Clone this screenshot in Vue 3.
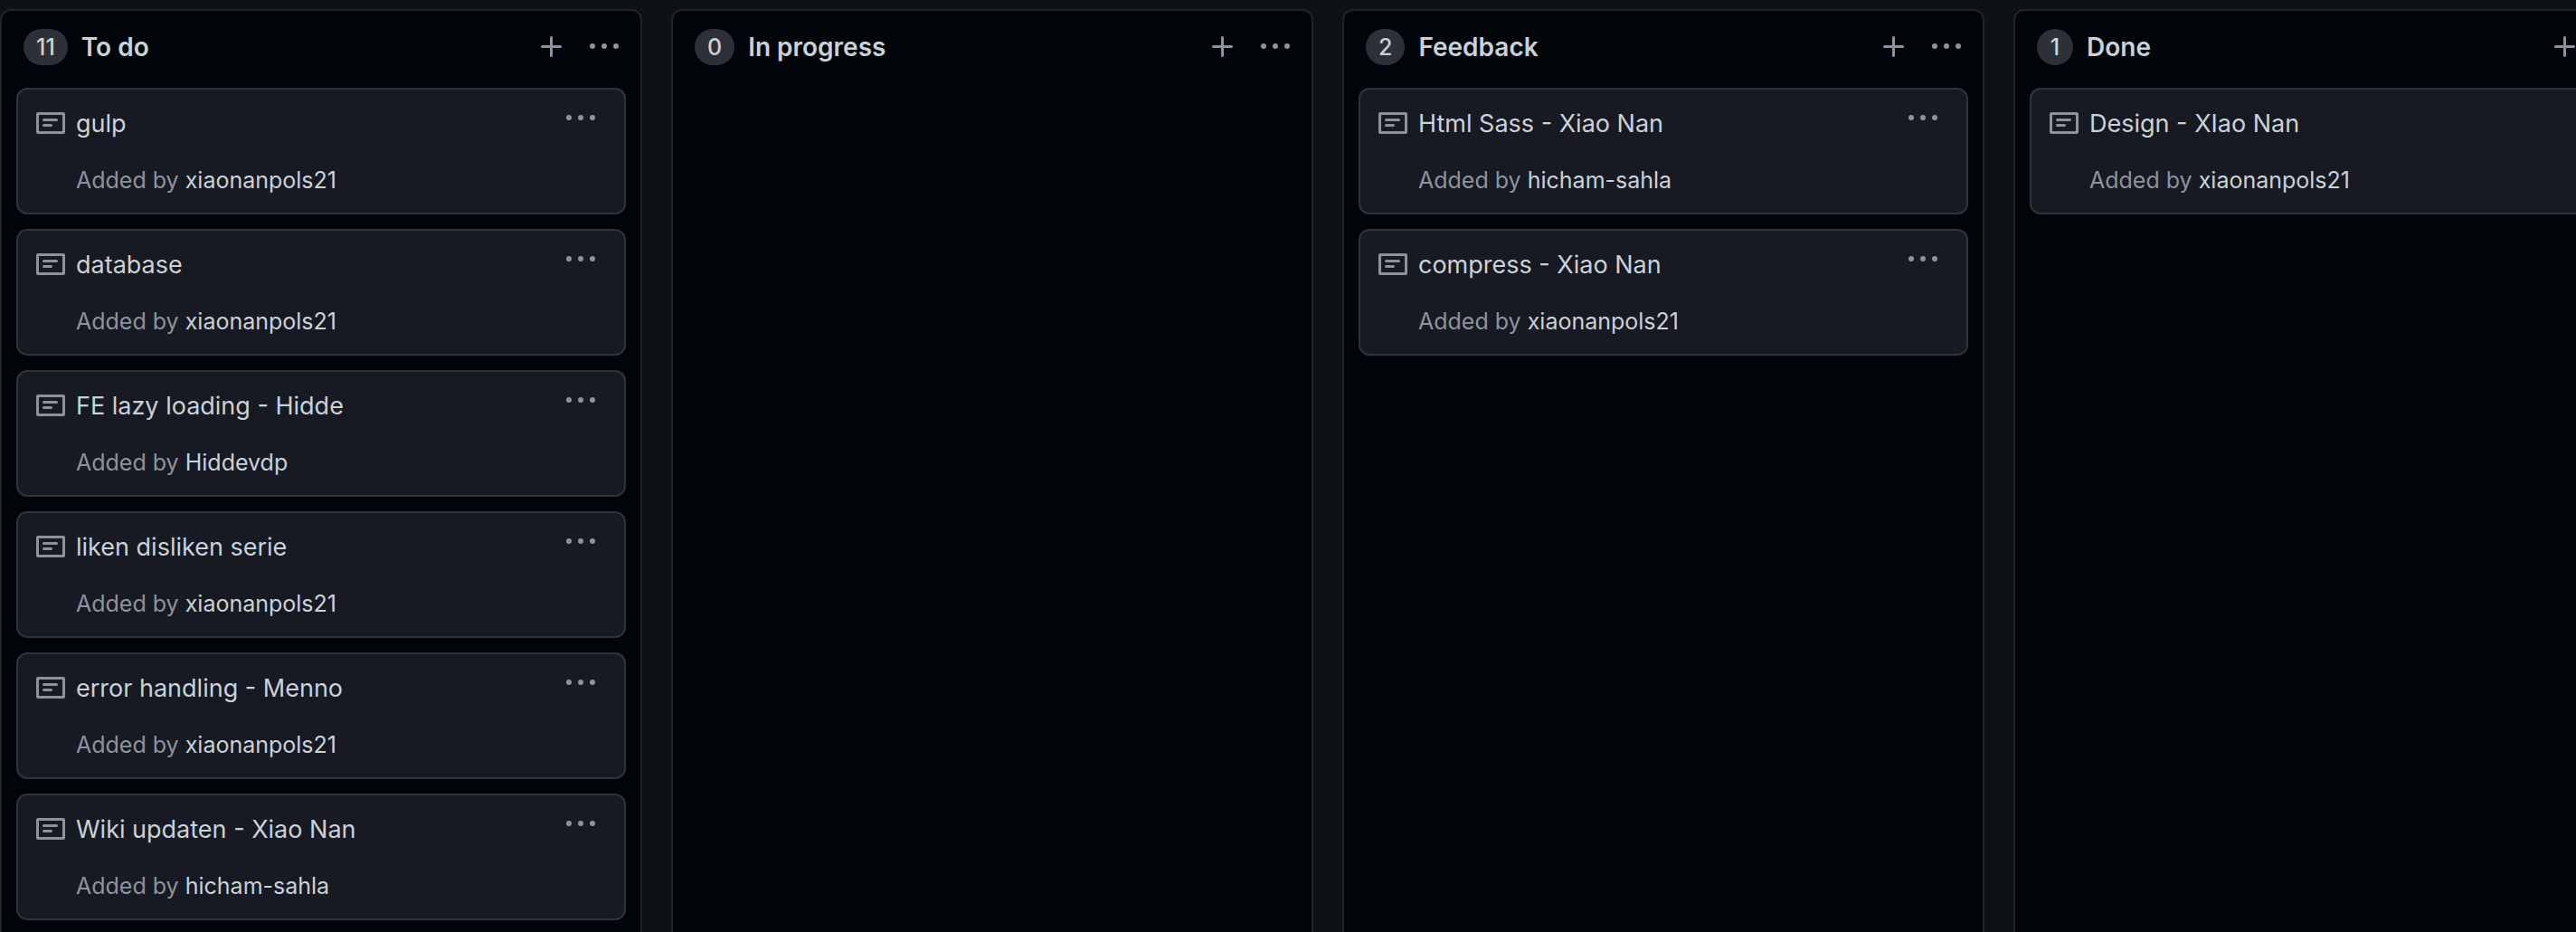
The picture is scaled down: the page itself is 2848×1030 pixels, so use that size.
<script setup>
const columns = [
  {
    name: 'To do',
    count: 11,
    cards: [
      { title: 'gulp', author: 'xiaonanpols21' },
      { title: 'database', author: 'xiaonanpols21' },
      { title: 'FE lazy loading - Hidde', author: 'Hiddevdp' },
      { title: 'liken disliken serie', author: 'xiaonanpols21' },
      { title: 'error handling - Menno', author: 'xiaonanpols21' },
      { title: 'Wiki updaten - Xiao Nan', author: 'hicham-sahla' },
    ],
  },
  { name: 'In progress', count: 0, cards: [] },
  {
    name: 'Feedback',
    count: 2,
    cards: [
      { title: 'Html Sass - Xiao Nan', author: 'hicham-sahla' },
      { title: 'compress - Xiao Nan', author: 'xiaonanpols21' },
    ],
  },
  {
    name: 'Done',
    count: 1,
    cards: [{ title: 'Design - XIao Nan', author: 'xiaonanpols21' }],
  },
]
</script>

<template>
  <main class="board">
    <section v-for="column in columns" :key="column.name" class="column">
      <header class="column-header">
        <span class="counter">{{ column.count }}</span>
        <h3 class="column-name">{{ column.name }}</h3>
        <div class="actions">
          <button type="button" class="icon-button">
            <svg class="icon" viewBox="0 0 16 16" aria-hidden="true">
              <path d="M7.75 2a.75.75 0 01.75.75V7h4.25a.75.75 0 110 1.5H8.5v4.25a.75.75 0 11-1.5 0V8.5H2.75a.75.75 0 010-1.5H7V2.75A.75.75 0 017.75 2z" />
            </svg>
          </button>
          <button type="button" class="icon-button">
            <svg class="icon" viewBox="0 0 16 16" aria-hidden="true">
              <path d="M8 9a1.5 1.5 0 100-3 1.5 1.5 0 000 3zM1.5 9a1.5 1.5 0 100-3 1.5 1.5 0 000 3zm13 0a1.5 1.5 0 100-3 1.5 1.5 0 000 3z" />
            </svg>
          </button>
        </div>
      </header>
      <div class="cards">
        <article v-for="card in column.cards" :key="card.title" class="card">
          <svg class="icon note" viewBox="0 0 16 16" aria-hidden="true">
            <path fill-rule="evenodd" d="M0 3c0-.55.45-1 1-1h14c.55 0 1 .45 1 1v10c0 .55-.45 1-1 1H1c-.55 0-1-.45-1-1V3zm1.5.5v9h13v-9h-13zM3.5 6.25a.75.75 0 01.75-.75h7a.75.75 0 010 1.5h-7a.75.75 0 01-.75-.75zm.75 2.25a.75.75 0 000 1.5h4a.75.75 0 000-1.5h-4z" />
          </svg>
          <div class="card-body">
            <p class="card-title">{{ card.title }}</p>
            <p class="card-meta">Added by <a class="author" href="#">{{ card.author }}</a></p>
          </div>
          <button type="button" class="icon-button">
            <svg class="icon" viewBox="0 0 16 16" aria-hidden="true">
              <path d="M8 9a1.5 1.5 0 100-3 1.5 1.5 0 000 3zM1.5 9a1.5 1.5 0 100-3 1.5 1.5 0 000 3zm13 0a1.5 1.5 0 100-3 1.5 1.5 0 000 3z" />
            </svg>
          </button>
        </article>
      </div>
    </section>
  </main>
</template>

<style>
body {
  margin: 0;
  background: #0e1217;
}
</style>

<style scoped>
.board {
  box-sizing: border-box;
  display: flex;
  gap: 32px;
  height: 100vh;
  padding-top: 10px;
  overflow: hidden;
  color: #c9d1d9;
  font-family: Inter, "Liberation Sans", sans-serif;
}

.column {
  box-sizing: border-box;
  flex: 0 0 710px;
  border: 2px solid #21252a;
  border-bottom: 0;
  border-radius: 12px 12px 0 0;
  background: #010409;
}

.column-header {
  display: flex;
  align-items: flex-start;
  gap: 15px;
  padding: 20px 24px;
}

.counter {
  box-sizing: border-box;
  min-width: 40px;
  height: 40px;
  padding: 0 14px;
  border-radius: 20px;
  background: #2d3038;
  font-size: 25px;
  font-weight: 500;
  line-height: 40px;
  text-align: center;
}

.column-name {
  flex: 1;
  margin: 0;
  font-size: 28px;
  font-weight: 600;
  line-height: 40px;
}

.actions {
  display: flex;
  gap: 26px;
}

.icon-button {
  display: flex;
  margin: 4px 0 0;
  padding: 0;
  border: 0;
  background: none;
  color: #8b949e;
  cursor: pointer;
}

.icon {
  display: block;
  flex: none;
  width: 32px;
  height: 32px;
  fill: currentColor;
}

.cards {
  display: flex;
  flex-direction: column;
  gap: 16px;
  padding: 5px 16px 16px;
}

.card {
  box-sizing: border-box;
  display: flex;
  align-items: flex-start;
  min-height: 140px;
  padding: 12px 32px 12px 20px;
  border: 2px solid #2f3439;
  border-radius: 12px;
  background: #171a22;
}

.note {
  margin: 9px 12px 0 0;
  color: #8b949e;
}

.card-body {
  flex: 1;
  min-width: 0;
}

.card-title,
.card-meta {
  margin: 0;
}

.card-title {
  padding: 5px 0 23px;
  font-size: 27px;
  line-height: 42px;
}

.card-meta {
  color: #8b949e;
  font-size: 25px;
  line-height: 36px;
}

.author {
  color: #c9d1d9;
  text-decoration: none;
}
</style>
